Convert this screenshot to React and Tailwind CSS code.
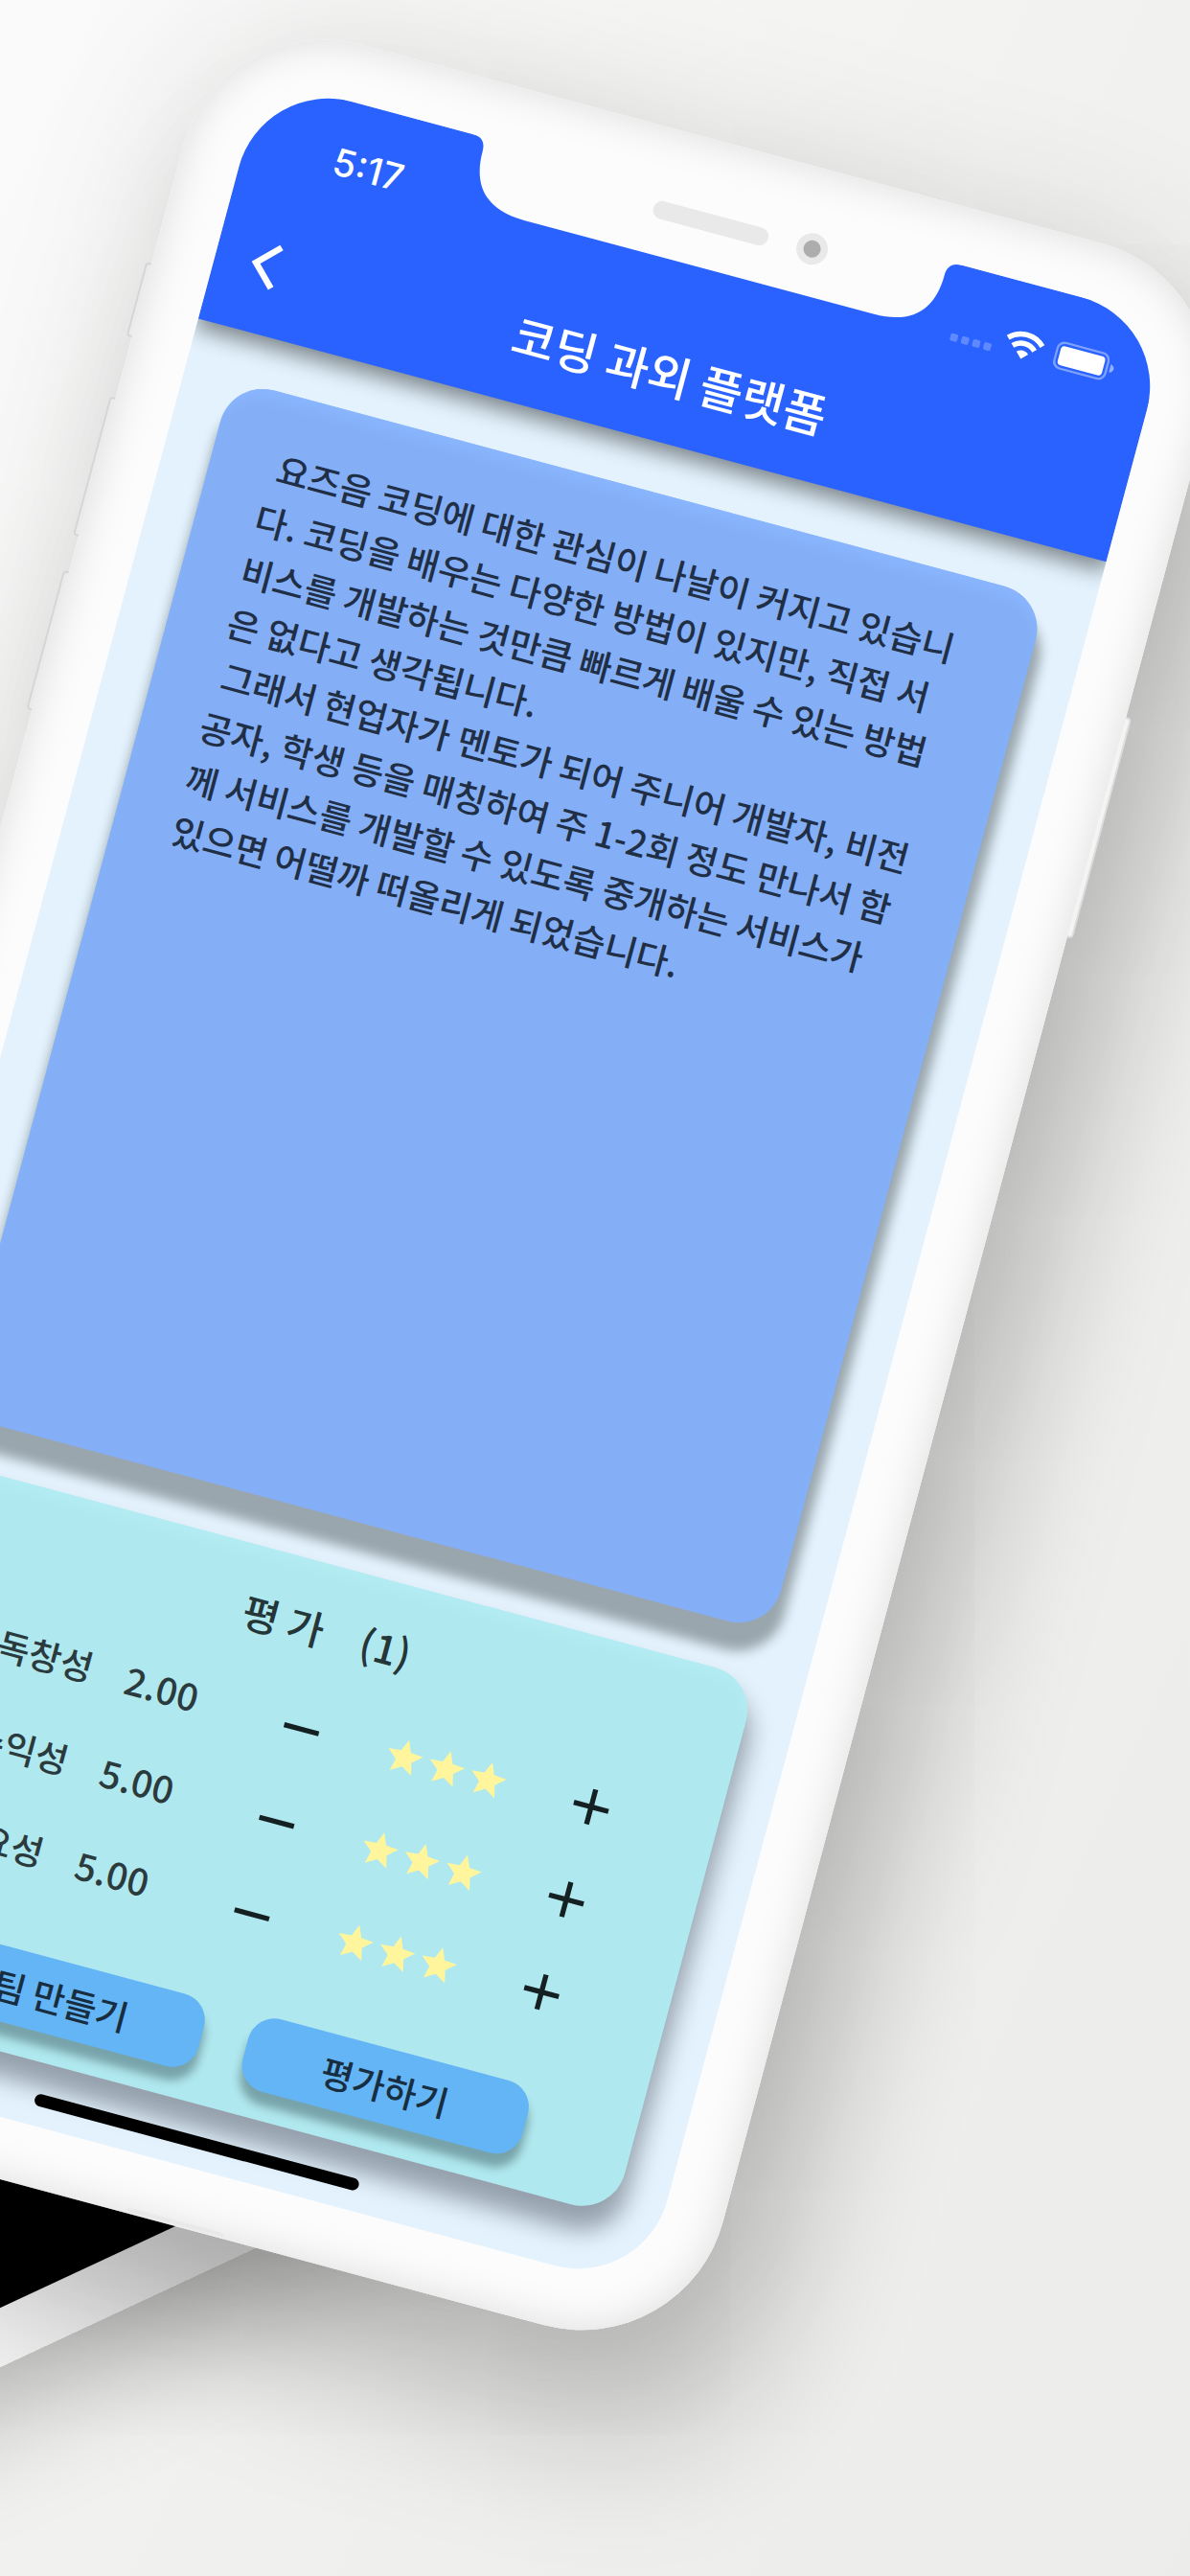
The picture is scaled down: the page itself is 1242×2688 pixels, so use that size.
const ratings = [
  { label: '독창성', score: '2.00' },
  { label: '수익성', score: '5.00' },
  { label: '필요성', score: '5.00' },
];

const intro =
  ' 요즈음 코딩에 대한 관심이 나날이 커지고 있습니다. 코딩을 배우는 다양한 방법이 있지만, 직접 서비스를 개발하는 것만큼 빠르게 배울 수 있는 방법은 없다고 생각됩니다.\n' +
  ' 그래서 현업자가 멘토가 되어 주니어 개발자, 비전공자, 학생 등을 매칭하여 주 1-2회 정도 만나서 함께 서비스를 개발할 수 있도록 중개하는 서비스가 있으면 어떨까 떠올리게 되었습니다.';

function Star() {
  return (
    <svg viewBox="0 0 24 24" className="size-[45px]" fill="#fff59d" aria-hidden="true">
      <path d="M12 17.27 18.18 21l-1.64-7.03L22 9.24l-7.19-.61L12 2 9.19 8.63 2 9.24l5.46 4.73L5.82 21z" />
    </svg>
  );
}

function StepButton({ name, plus }) {
  return (
    <button type="button" aria-label={name} className="flex items-center justify-center">
      <svg viewBox="0 0 24 24" className="size-16" fill="#152022" aria-hidden="true">
        <path d={plus ? 'M19 13h-6v6h-2v-6H5v-2h6V5h2v6h6z' : 'M19 13H5v-2h14z'} />
      </svg>
    </button>
  );
}

function Rating({ label, score }) {
  return (
    <li className="grid h-[100px] grid-cols-[266fr_126fr_188fr_126fr] items-center">
      <span className="flex items-center gap-9 pb-2.5 text-[#2b3b3d]">
        <span className="text-[37px] font-medium">{label}</span>
        <span className="text-[39px] font-medium">{score}</span>
      </span>
      <StepButton name={label + ' 낮추기'} />
      <span role="img" aria-label="별 3개" className="flex justify-center">
        <Star />
        <Star />
        <Star />
      </span>
      <StepButton name={label + ' 높이기'} plus />
    </li>
  );
}

function ActionButton({ children }) {
  return (
    <button
      type="button"
      className="h-[78px] w-[302px] rounded-[28px] bg-[#64b5f6] text-[37px] leading-none font-medium text-[#182e40] shadow-[2px_13px_10px_1px_rgba(0,20,25,0.32)]"
    >
      {children}
    </button>
  );
}

function Notch() {
  return (
    <svg
      viewBox="0 0 528 73"
      className="absolute inset-x-0 top-0 z-20 mx-auto h-[73px] w-[528px] overflow-visible"
      aria-hidden="true"
    >
      <path
        d="M0 -4V0C10 0 14.5 5 14.5 15C14.5 50 32 73 75 73H453C496 73 513.5 50 513.5 15C513.5 5 518 0 528 0V-4Z"
        fill="#fcfcfc"
      />
      <rect x="202" y="16" width="124" height="19" rx="9.5" fill="#e9e9e9" />
      <circle cx="373" cy="24" r="16.5" fill="#e9e9e9" />
      <circle cx="373" cy="24" r="9" fill="#adadad" />
    </svg>
  );
}

function StatusBar() {
  return (
    <div className="flex h-[115px] items-center justify-between pt-3 pr-[44px] pl-[94px]">
      <span className="font-['Inter'] text-[39px] leading-none font-medium">5:17</span>
      <div className="flex items-end gap-3" aria-hidden="true">
        <div className="flex gap-1">
          <i className="size-2 rounded-xs bg-white/25" />
          <i className="size-2 rounded-xs bg-white/25" />
          <i className="size-2 rounded-xs bg-white/25" />
          <i className="size-2 rounded-xs bg-white/25" />
        </div>
        <svg viewBox="0 0 42 30" className="h-[30px] w-[42px]" fill="none" stroke="#fff" strokeWidth="5.5">
          <path d="M2.5 11.2A26 26 0 0 1 39.5 11.2" />
          <path d="M9.2 18A16.7 16.7 0 0 1 32.8 18" />
          <path d="M21 20.5C18.5 20.5 16.3 21.5 14.7 23.1L21 29.5L27.3 23.1C25.7 21.5 23.5 20.5 21 20.5Z" fill="#fff" stroke="none" />
        </svg>
        <svg viewBox="0 0 64 30" className="h-[30px] w-[64px]" aria-hidden="true">
          <rect x="1.2" y="1.2" width="55" height="27.6" rx="7.5" fill="none" stroke="#fff" strokeOpacity="0.4" strokeWidth="2.4" />
          <rect x="4.8" y="4.8" width="47.8" height="20.4" rx="4" fill="#fff" />
          <path d="M59.5 10.5C62 11.5 63.5 13 63.5 15C63.5 17 62 18.5 59.5 19.5Z" fill="#fff" fillOpacity="0.5" />
        </svg>
      </div>
    </div>
  );
}

function Phone() {
  return (
    <div className="relative mt-28 -ml-20 w-[89%] rotate-15 rounded-[153px] shadow-[0_0_160px_rgba(0,0,0,0.10),70px_100px_150px_rgba(0,0,0,0.2)]">
      <div className="absolute top-[277px] -left-1.5 h-20 w-3 rounded-sm border-2 border-[#d6d6d6] bg-[#ebebeb]" />
      <div className="absolute top-[422px] -left-1.5 h-[150px] w-3 rounded-sm border-2 border-[#d6d6d6] bg-[#ebebeb]" />
      <div className="absolute top-[610px] -left-1.5 h-[150px] w-3 rounded-sm border-2 border-[#d6d6d6] bg-[#ebebeb]" />
      <div className="absolute top-[471px] -right-1.5 h-[238px] w-3 rounded-sm border-2 border-[#dedede] bg-[#f4f4f4]" />

      <div className="relative rounded-[153px] bg-[#fcfcfc] px-[62px] pt-[60px] pb-[63px] shadow-[inset_0_0_44px_rgba(0,0,0,0.13),inset_0_0_2px_#fff]">
        <div className="relative">
          <Notch />
          <div className="overflow-hidden rounded-[96px] bg-[#e3f2fd]">
            <header className="relative z-10 bg-[#2962ff] text-white shadow-[0_8px_22px_2px_rgba(0,0,0,0.45)]">
              <StatusBar />
              <div className="grid h-[145px] grid-cols-[1fr_auto_1fr] items-center px-9">
                <button type="button" aria-label="뒤로" className="w-8">
                  <svg viewBox="0 0 32 54" className="h-[54px] w-8" fill="none" stroke="#fff" strokeWidth="6.5" aria-hidden="true">
                    <path d="M29 5L7 27L29 49" />
                  </svg>
                </button>
                <h1 className="text-[49px] font-medium">코딩 과외 플랫폼</h1>
              </div>
            </header>

            <main className="flex flex-col gap-[50px] px-[50px] pt-[52px]">
              <article className="min-h-[1118px] rounded-[46px] bg-[#84aff7] pt-12 pr-[66px] pl-[62px] shadow-[inset_0_16px_16px_-8px_#8bb7ff,5px_24px_12px_5px_rgba(15,20,20,0.34)]">
                <p className="text-[37px] leading-14 font-medium break-all whitespace-pre-wrap text-[#212f46]">{intro}</p>
              </article>

              <section className="rounded-[46px] bg-[#b0e8ef] pt-9 pb-[30px] shadow-[inset_0_16px_16px_-8px_#b3edf3,5px_22px_24px_3px_rgba(15,20,30,0.36)]">
                <h2 className="flex justify-center gap-10 pr-3 text-[42px] leading-[64px] font-medium text-[#253638]">
                  <span>평 가</span>
                  <span>(1)</span>
                </h2>
                <ul className="mt-6 pr-[70px] pl-[106px]">
                  {ratings.map((r) => (
                    <Rating key={r.label} label={r.label} score={r.score} />
                  ))}
                </ul>
                <div className="mt-12 flex justify-center gap-12">
                  <ActionButton>팀 만들기</ActionButton>
                  <ActionButton>평가하기</ActionButton>
                </div>
              </section>
            </main>

            <div className="relative mx-auto mt-8 mb-[21px] h-[13px] w-[350px] rounded-full bg-black" />
          </div>
        </div>
      </div>
      <div className="absolute inset-x-0 bottom-0.5 mx-auto h-1 w-[104px] bg-[#e9e9e9]" />
    </div>
  );
}

export default function App() {
  return (
    <div className="relative flow-root min-h-screen overflow-hidden bg-linear-to-br from-[#fafafa] via-[#f1f1ef] to-[#ececea] font-['Noto_Sans_CJK_KR',sans-serif]">
      <div className="absolute top-[1537px] -left-[600px] h-[700px] w-[1100px] origin-bottom-right -rotate-25 bg-linear-to-r from-[#f2f2f2] from-50% to-[#dedede] to-80% pb-14 shadow-[20px_40px_120px_rgba(0,0,0,0.25)]">
        <div className="h-full bg-black" />
      </div>
      <Phone />
    </div>
  );
}
